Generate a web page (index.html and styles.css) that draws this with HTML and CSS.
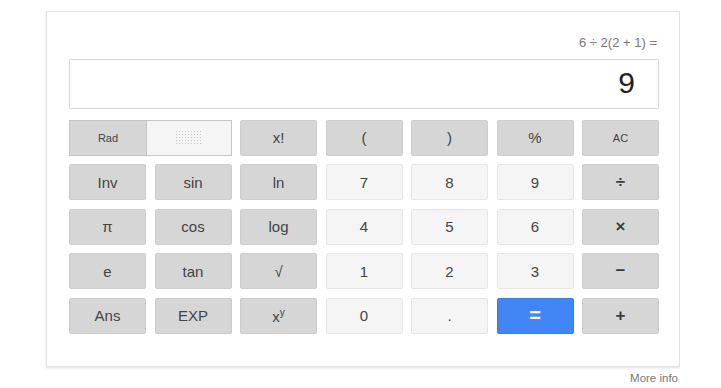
FILE: index.html
```html
<!DOCTYPE html>
<html lang="en">
<head>
    <meta charset="UTF-8">
    <title>Calculator</title>
    <link rel="stylesheet" href="styles.css">
</head>
<body>
    <div class="card">
        <div class="expr">6 ÷ 2(2 + 1) =</div>
        <div class="display">9</div>

        <div class="keys">
            <div class="toggle">
                <span class="rad">Rad</span>
                <span class="deg"><span class="dots"></span></span>
            </div>
            <button class="key fn">x!</button>
            <button class="key fn">(</button>
            <button class="key fn">)</button>
            <button class="key fn">%</button>
            <button class="key fn small">AC</button>

            <button class="key fn">Inv</button>
            <button class="key fn">sin</button>
            <button class="key fn">ln</button>
            <button class="key num">7</button>
            <button class="key num">8</button>
            <button class="key num">9</button>
            <button class="key fn op">÷</button>

            <button class="key fn">π</button>
            <button class="key fn">cos</button>
            <button class="key fn">log</button>
            <button class="key num">4</button>
            <button class="key num">5</button>
            <button class="key num">6</button>
            <button class="key fn op">×</button>

            <button class="key fn">e</button>
            <button class="key fn">tan</button>
            <button class="key fn">√</button>
            <button class="key num">1</button>
            <button class="key num">2</button>
            <button class="key num">3</button>
            <button class="key fn op">−</button>

            <button class="key fn">Ans</button>
            <button class="key fn">EXP</button>
            <button class="key fn">x<sup>y</sup></button>
            <button class="key num">0</button>
            <button class="key num">.</button>
            <button class="key equals">=</button>
            <button class="key fn op">+</button>
        </div>
    </div>
    <div class="more">More info</div>
</body>
</html>
```

FILE: styles.css
```css
* {
    margin: 0;
    padding: 0;
    box-sizing: border-box;
}

body {
    font-family: "Liberation Sans", Arial, sans-serif;
    background-color: #ffffff;
    color: #444444;
    padding: 11px 0 0 46px;
    width: 680px;
}

.card {
    width: 634px;
    border: 1px solid #e3e3e3;
    box-shadow: 0 1px 2px rgba(0, 0, 0, 0.12);
    padding: 23px 20px 32px 22px;
}

.expr {
    text-align: right;
    font-size: 13px;
    line-height: 16px;
    color: #777777;
    padding-right: 2px;
}

.display {
    margin-top: 8px;
    height: 50px;
    border: 1px solid #d9d9d9;
    text-align: right;
    font-size: 30px;
    line-height: 46px;
    color: #222222;
    padding-right: 23px;
}

.keys {
    margin-top: 10.5px;
    display: grid;
    grid-template-columns: repeat(7, 77px);
    grid-auto-rows: 36px;
    gap: 8.5px;
}

.key {
    font-family: inherit;
    font-size: 15px;
    color: #444444;
    border-radius: 2px;
    cursor: pointer;
}

.fn {
    background-color: #d6d6d6;
    border: 1px solid #cdcdcd;
}

.num {
    background-color: #f5f5f5;
    border: 1px solid #e6e6e6;
}

.small {
    font-size: 11px;
}

.op {
    font-size: 17px;
    font-weight: bold;
    color: #3a3a3a;
}

.equals {
    background-color: #4285f4;
    border: 1px solid #3b78e7;
    color: #ffffff;
    font-size: 20px;
    font-weight: bold;
}

.key sup {
    font-size: 10px;
    vertical-align: 6px;
}

.toggle {
    grid-column: span 2;
    display: flex;
    border: 1px solid #c6c6c6;
}

.rad {
    width: 77px;
    background-color: #d6d6d6;
    border-right: 1px solid #c6c6c6;
    font-size: 11px;
    display: flex;
    align-items: center;
    justify-content: center;
}

.deg {
    flex: 1;
    background-color: #f5f5f5;
    display: flex;
    align-items: center;
    justify-content: center;
}

.dots {
    width: 28px;
    height: 16px;
    background-image: radial-gradient(circle, #c4c4c4 0.8px, transparent 1px);
    background-size: 3px 3px;
}

.more {
    width: 634px;
    text-align: right;
    font-size: 11.5px;
    color: #777777;
    margin-top: 5px;
    padding-right: 2px;
}
```
